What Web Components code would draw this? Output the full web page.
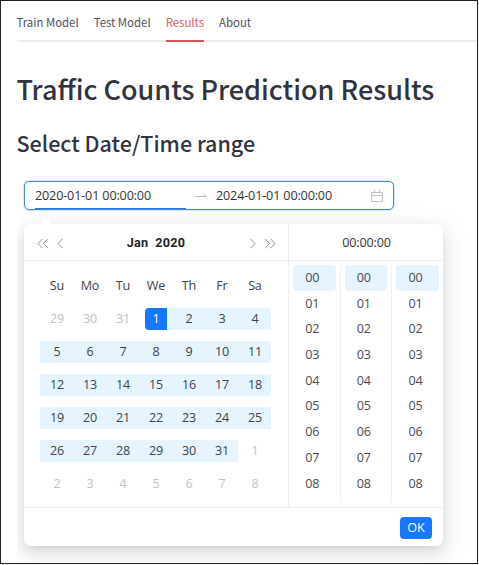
<!DOCTYPE html>
<html lang="en">
<head>
<meta charset="utf-8">
<title>Traffic Counts Prediction Results</title>
<style>
body{margin:0;background:#f0f0f0;overflow:hidden}
</style>
</head>
<body>
<traffic-page></traffic-page>
<script>
const define = (name, html, setup) => customElements.define(name, class extends HTMLElement {
  connectedCallback() {
    if (this.shadowRoot) return;
    const root = this.attachShadow({mode: 'open'});
    root.innerHTML = typeof html === 'function' ? html(this) : html;
    if (setup) setup(root, this);
  }
});

define('nav-tab', `<style>
:host{display:block;box-sizing:border-box;height:41px;line-height:42px;color:#4f505b;white-space:nowrap;font-size:11.4px}
:host([active]){color:#e9575b;border-bottom:2px solid #da5356}
</style><slot></slot>`);

define('nav-tabs', `<style>
:host{display:flex;gap:15px;box-sizing:border-box;height:41px;margin-left:15.5px;box-shadow:inset 0 -2px #ececed;font-family:"Noto Sans CJK JP","Noto Sans",sans-serif}
</style><slot></slot>`);

define('chevron-icon', el => {
  const dbl = el.hasAttribute('double');
  return `<style>:host{display:block;height:11px}:host([flip]){transform:scaleX(-1)}svg{display:block}</style>
  <svg width="${dbl ? 12 : 7}" height="11" fill="none" stroke="#929292" stroke-width="1"><path d="M5.5.8 1 5.5l4.500 4.700${dbl ? 'M11 .8 6.500 5.500 11 10.200' : ''}"/></svg>`;
});

define('range-input', `<style>
:host{display:flex;box-sizing:border-box;width:370px;height:29px;margin-left:7px;padding:0 10px;border:1px solid #458ad9;border-radius:5px;background:#fff;box-shadow:0 0 0 1px #d5ebff;align-items:center;color:#333;font-size:12.6px;letter-spacing:-.15px;line-height:27px}
.v{width:151px;height:27px;box-sizing:border-box;white-space:nowrap}
.on{box-shadow:inset 0 -1px #2878e4}
.arrow{margin:1px 9px 0 9px}
.cal{margin-left:34px}
svg{display:block;flex:none}
</style>
<div class="v on">2020-01-01 00:00:00</div>
<svg class="arrow" width="12" height="8" fill="none" stroke="#b9b9b9"><path d="M0 4.500h11L8 1.500"/></svg>
<div class="v" style="width:121px">2024-01-01 00:00:00</div>
<svg class="cal" width="12" height="12" fill="none" stroke="#c2c2c2"><path d="M.5 2.500h11v9H.5zM.5 5.500h11M3.500 0v3.500M8.500 0v3.500"/></svg>`);

define('month-grid', `<style>
:host{display:grid;grid-template-columns:repeat(7,33px);grid-auto-rows:33px;padding:8px 0 0 16.400px;align-items:center;text-align:center;color:#404347;font-size:12.6px;letter-spacing:-.2px}
div{height:22px;line-height:22px}
.in{background:#e6f4ff}
.out{color:#c3c3c3}
.start{background:linear-gradient(90deg,transparent 16px,#e6f4ff 16px)}
.start span{display:block;width:22px;margin:0 auto;background:#1677ff;color:#fff;border-radius:4px 0 0 4px}
</style>`, root => {
  const add = (text, cls) => {
    const d = document.createElement('div');
    if (cls) d.className = cls;
    if (cls === 'start') { const s = document.createElement('span'); s.textContent = text; d.append(s); }
    else d.textContent = text;
    root.append(d);
  };
  ['Su','Mo','Tu','We','Th','Fr','Sa'].forEach(d => add(d));
  [29,30,31].forEach(d => add(d, 'out'));
  for (let d = 1; d <= 31; d++) add(d, d === 1 ? 'start' : 'in');
  for (let d = 1; d <= 8; d++) add(d, 'out');
});

define('time-column', `<style>
:host{display:block;box-sizing:border-box;height:238px;padding:0 4px;border-right:1px solid #f0f0f0;text-align:center;color:#4a4c4f;font-size:12.6px;letter-spacing:-.2px}
:host(:last-of-type){border:0}
div{height:25.7px;line-height:26px;padding-right:4px}
div:first-of-type{background:#e6f4ff;border-radius:4px}
</style>`, root => {
  for (let i = 0; i < 9; i++) {
    const d = document.createElement('div');
    d.textContent = '0' + i;
    root.append(d);
  }
});

define('date-panel', `<style>
:host{display:block;position:relative;box-sizing:border-box;width:419px;height:322px;margin:14px 0 0 7px;border-radius:7px;background:#fff;box-shadow:0 5px 14px rgba(0,0,0,.10),0 3px 6px -4px rgba(0,0,0,.12),0 8px 26px 7px rgba(0,0,0,.06)}
.tip{position:absolute;left:14px;top:-6px}
svg{display:block}
.body{display:grid;grid-template-columns:265px 1fr;height:283px;border-bottom:1px solid #ededed}
.left{border-right:1px solid #ededed}
.head{display:flex;align-items:center;box-sizing:border-box;height:37px;border-bottom:1px solid #ededed;padding:0 12px 0 13px;color:#222}
.month{flex:1;text-align:center;font:700 12.600px Roboto,sans-serif;white-space:pre;letter-spacing:.3px;padding-right:1px}
.prev,.next{display:flex;gap:8px;padding-top:2px}
.clock{justify-content:center;font-size:12.6px;font-weight:500;letter-spacing:-.15px;color:#333}
.times{display:grid;grid-template-columns:51.500px 51.500px 51px;padding-top:4px}
.foot{display:flex;justify-content:flex-end;padding:9px 11px}
button{width:32px;height:22px;padding:0;border:0;border-radius:4px;background:#1677ff;color:#fff;font:12.6px/22px "Open Sans",sans-serif}
</style>
<svg class="tip" width="16" height="7" fill="#fff"><path d="M0 7Q3 6 5 3L7 .8q1-.8 2 0L11 3q2 3 5 4z"/></svg>
<div class="body">
 <div class="left"><div class="head"><div class="prev"><chevron-icon double></chevron-icon><chevron-icon></chevron-icon></div><div class="month">Jan  2020</div><div class="next"><chevron-icon flip></chevron-icon><chevron-icon double flip></chevron-icon></div></div><month-grid></month-grid></div>
 <div><div class="head clock">00:00:00</div><div class="times"><time-column></time-column><time-column></time-column><time-column></time-column></div></div>
</div>
<div class="foot"><button>OK</button></div>`);

define('traffic-page', `<style>
:host{display:block;box-sizing:border-box;width:478px;height:564px;border:1px solid #222126;background:#fff;font-family:"Open Sans","Noto Sans",sans-serif}
h1,h2{margin:0;color:#31333f;font-family:"Noto Sans CJK JP","Noto Sans",sans-serif;font-weight:500;white-space:nowrap}
h1{margin:27px 0 0 15.500px;font-size:27px;line-height:40px}
h2{margin:18px 0 0 15.500px;font-size:21.5px;line-height:32px}
.stage{margin:13px 0 0 16px;height:391px;overflow:hidden;padding-top:9px;box-sizing:border-box}
</style>
<nav-tabs><nav-tab>Train Model</nav-tab><nav-tab>Test Model</nav-tab><nav-tab active>Results</nav-tab><nav-tab>About</nav-tab></nav-tabs>
<h1>Traffic Counts Prediction Results</h1>
<h2>Select Date/Time range</h2>
<div class="stage"><range-input></range-input><date-panel></date-panel></div>`);
</script>
</body>
</html>
